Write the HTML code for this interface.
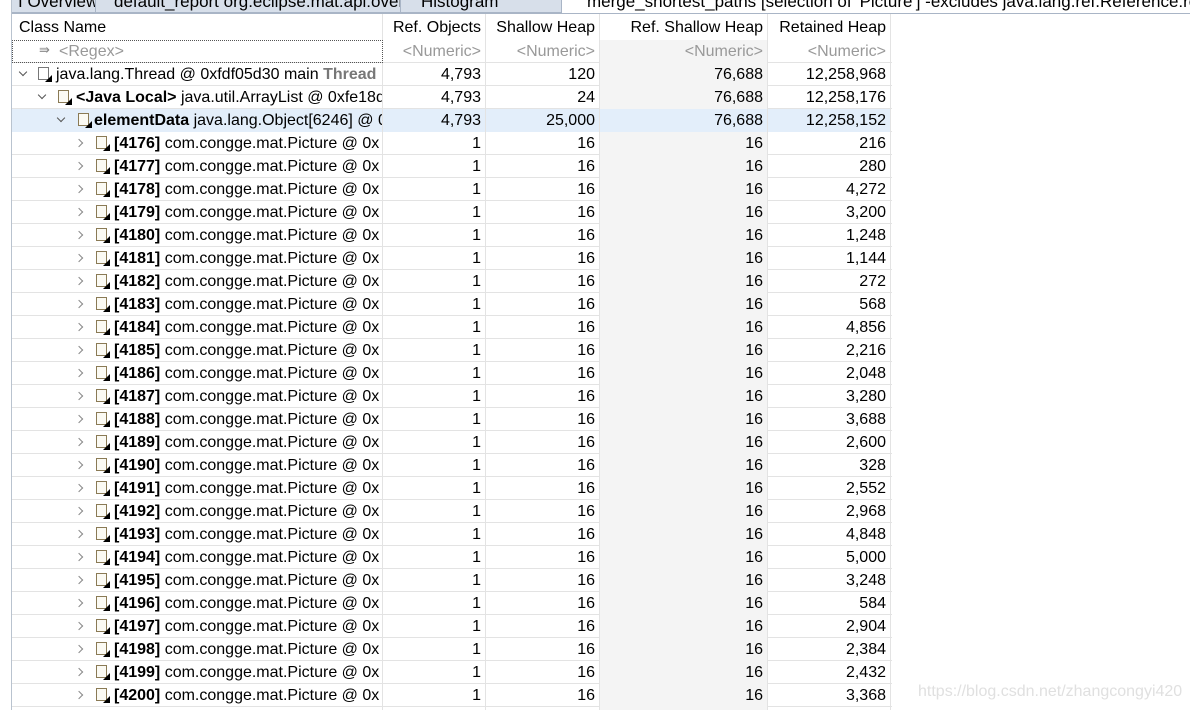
<!DOCTYPE html>
<html><head><meta charset="utf-8"><style>
*{margin:0;padding:0;box-sizing:border-box}
html,body{width:1190px;height:710px;overflow:hidden}
body{background:#fff;font-family:"Liberation Sans",sans-serif;font-size:16px;color:#000;position:relative}
.tabs{position:absolute;left:0;top:0;width:1190px;height:13px;overflow:hidden}
.tab{position:absolute;top:0;height:13px;background:#d7dfea;border-right:1px solid #a9b5c6;border-bottom:1px solid #a9b5c6;overflow:hidden}
.tab span{position:absolute;top:-8px;white-space:nowrap;font-size:17px;color:#000}
.lstrip{position:absolute;left:11px;top:0;width:1px;height:710px;background:#b9c3cf}
.row{position:absolute;left:12px;width:880px;height:23px;border-bottom:1px solid #e3e3e3}
.c{position:absolute;top:0;height:23px;line-height:24px;white-space:nowrap;overflow:hidden;border-right:1px solid #e3e3e3}
.n{text-align:right;padding-right:4px}
.c1{left:0;width:371px}
.c2{left:371px;width:103px}
.c3{left:474px;width:114px}
.c4{left:588px;width:168px;background:#f4f4f4}
.c5{left:756px;width:123px}
.sel .c{background:#e3eefa}
.chev{position:absolute;top:8px;width:6px;height:6px;border-right:1.3px solid #888;border-bottom:1.3px solid #888}
.cr{transform:rotate(-45deg)}
.cd{transform:rotate(45deg);top:6px;border-color:#555}
.ic{position:absolute;top:4px;width:11px;height:13px;border:1px solid #8a7a55;background:#fbfaf3}
.ic:after{content:"";position:absolute;right:-4px;bottom:-3px;border-left:7px solid transparent;border-bottom:7px solid #000}
.t{position:absolute;top:0}
.g{color:#999}
</style></head><body>
<div class="tabs">
<div class="tab" style="left:12px;width:84px"><span style="left:6px">I Overview</span></div>
<div class="tab" style="left:96px;width:305px"><span style="left:18px">default_report  org.eclipse.mat.api:overview</span></div>
<div class="tab" style="left:401px;width:161px"><span style="left:20px">Histogram</span></div>
<div class="tab" style="left:562px;width:640px;background:#fff;border:none"><span style="left:25px">merge_shortest_paths [selection of 'Picture'] -excludes java.lang.ref.Reference:refer</span></div>
</div>
<div style="position:absolute;left:12px;top:13px;width:1178px;height:1px;background:#a9b5c6"></div>
<div class="lstrip"></div>
<div class="row" style="top:14px;height:26px;border:none">
<div class="c c1" style="height:26px;line-height:28px;padding-left:7px">Class Name</div>
<div class="c c2 n" style="height:26px;line-height:28px">Ref. Objects</div>
<div class="c c3 n" style="height:26px;line-height:28px">Shallow Heap</div>
<div class="c c4 n" style="height:26px;line-height:28px;background:#fff">Ref. Shallow Heap</div>
<div class="c c5 n" style="height:26px;line-height:28px">Retained Heap</div>
</div>
<div class="row" style="top:40px">
<div class="c c1 g" style="border:1px dotted #555;padding-left:46px;line-height:22px">&lt;Regex&gt;<span style="position:absolute;left:26px;top:-2px;color:#888;font-size:13px">⇛</span></div>
<div class="c c2 n g">&lt;Numeric&gt;</div>
<div class="c c3 n g">&lt;Numeric&gt;</div>
<div class="c c4 n g">&lt;Numeric&gt;</div>
<div class="c c5 n g">&lt;Numeric&gt;</div>
</div>
<div class="row" style="top:63px">
<div class="c c1"><i class="chev cd" style="left:8px"></i><i class="ic" style="left:26px;background:#fff;border-color:#777"></i><span class="t" style="left:44px">java.lang.Thread @ 0xfdf05d30  main <b style="color:#777">Thread</b></span></div>
<div class="c c2 n">4,793</div><div class="c c3 n">120</div><div class="c c4 n">76,688</div><div class="c c5 n">12,258,968</div>
</div>
<div class="row" style="top:86px">
<div class="c c1"><i class="chev cd" style="left:27px"></i><i class="ic" style="left:46px"></i><span class="t" style="left:64px"><b>&lt;Java Local&gt;</b> java.util.ArrayList @ 0xfe18d</span></div>
<div class="c c2 n">4,793</div><div class="c c3 n">24</div><div class="c c4 n">76,688</div><div class="c c5 n">12,258,176</div>
</div>
<div class="row sel" style="top:109px">
<div class="c c1"><i class="chev cd" style="left:46px"></i><i class="ic" style="left:66px"></i><span class="t" style="left:82px"><b>elementData</b> java.lang.Object[6246] @ 0</span></div>
<div class="c c2 n">4,793</div><div class="c c3 n">25,000</div><div class="c c4 n">76,688</div><div class="c c5 n">12,258,152</div>
</div>
<div class="row" style="top:132px"><div class="c c1"><i class="chev cr" style="left:64px"></i><i class="ic" style="left:84px"></i><span class="t" style="left:102px"><b>[4176]</b> com.congge.mat.Picture @ 0x</span></div><div class="c c2 n">1</div><div class="c c3 n">16</div><div class="c c4 n">16</div><div class="c c5 n">216</div></div>
<div class="row" style="top:155px"><div class="c c1"><i class="chev cr" style="left:64px"></i><i class="ic" style="left:84px"></i><span class="t" style="left:102px"><b>[4177]</b> com.congge.mat.Picture @ 0x</span></div><div class="c c2 n">1</div><div class="c c3 n">16</div><div class="c c4 n">16</div><div class="c c5 n">280</div></div>
<div class="row" style="top:178px"><div class="c c1"><i class="chev cr" style="left:64px"></i><i class="ic" style="left:84px"></i><span class="t" style="left:102px"><b>[4178]</b> com.congge.mat.Picture @ 0x</span></div><div class="c c2 n">1</div><div class="c c3 n">16</div><div class="c c4 n">16</div><div class="c c5 n">4,272</div></div>
<div class="row" style="top:201px"><div class="c c1"><i class="chev cr" style="left:64px"></i><i class="ic" style="left:84px"></i><span class="t" style="left:102px"><b>[4179]</b> com.congge.mat.Picture @ 0x</span></div><div class="c c2 n">1</div><div class="c c3 n">16</div><div class="c c4 n">16</div><div class="c c5 n">3,200</div></div>
<div class="row" style="top:224px"><div class="c c1"><i class="chev cr" style="left:64px"></i><i class="ic" style="left:84px"></i><span class="t" style="left:102px"><b>[4180]</b> com.congge.mat.Picture @ 0x</span></div><div class="c c2 n">1</div><div class="c c3 n">16</div><div class="c c4 n">16</div><div class="c c5 n">1,248</div></div>
<div class="row" style="top:247px"><div class="c c1"><i class="chev cr" style="left:64px"></i><i class="ic" style="left:84px"></i><span class="t" style="left:102px"><b>[4181]</b> com.congge.mat.Picture @ 0x</span></div><div class="c c2 n">1</div><div class="c c3 n">16</div><div class="c c4 n">16</div><div class="c c5 n">1,144</div></div>
<div class="row" style="top:270px"><div class="c c1"><i class="chev cr" style="left:64px"></i><i class="ic" style="left:84px"></i><span class="t" style="left:102px"><b>[4182]</b> com.congge.mat.Picture @ 0x</span></div><div class="c c2 n">1</div><div class="c c3 n">16</div><div class="c c4 n">16</div><div class="c c5 n">272</div></div>
<div class="row" style="top:293px"><div class="c c1"><i class="chev cr" style="left:64px"></i><i class="ic" style="left:84px"></i><span class="t" style="left:102px"><b>[4183]</b> com.congge.mat.Picture @ 0x</span></div><div class="c c2 n">1</div><div class="c c3 n">16</div><div class="c c4 n">16</div><div class="c c5 n">568</div></div>
<div class="row" style="top:316px"><div class="c c1"><i class="chev cr" style="left:64px"></i><i class="ic" style="left:84px"></i><span class="t" style="left:102px"><b>[4184]</b> com.congge.mat.Picture @ 0x</span></div><div class="c c2 n">1</div><div class="c c3 n">16</div><div class="c c4 n">16</div><div class="c c5 n">4,856</div></div>
<div class="row" style="top:339px"><div class="c c1"><i class="chev cr" style="left:64px"></i><i class="ic" style="left:84px"></i><span class="t" style="left:102px"><b>[4185]</b> com.congge.mat.Picture @ 0x</span></div><div class="c c2 n">1</div><div class="c c3 n">16</div><div class="c c4 n">16</div><div class="c c5 n">2,216</div></div>
<div class="row" style="top:362px"><div class="c c1"><i class="chev cr" style="left:64px"></i><i class="ic" style="left:84px"></i><span class="t" style="left:102px"><b>[4186]</b> com.congge.mat.Picture @ 0x</span></div><div class="c c2 n">1</div><div class="c c3 n">16</div><div class="c c4 n">16</div><div class="c c5 n">2,048</div></div>
<div class="row" style="top:385px"><div class="c c1"><i class="chev cr" style="left:64px"></i><i class="ic" style="left:84px"></i><span class="t" style="left:102px"><b>[4187]</b> com.congge.mat.Picture @ 0x</span></div><div class="c c2 n">1</div><div class="c c3 n">16</div><div class="c c4 n">16</div><div class="c c5 n">3,280</div></div>
<div class="row" style="top:408px"><div class="c c1"><i class="chev cr" style="left:64px"></i><i class="ic" style="left:84px"></i><span class="t" style="left:102px"><b>[4188]</b> com.congge.mat.Picture @ 0x</span></div><div class="c c2 n">1</div><div class="c c3 n">16</div><div class="c c4 n">16</div><div class="c c5 n">3,688</div></div>
<div class="row" style="top:431px"><div class="c c1"><i class="chev cr" style="left:64px"></i><i class="ic" style="left:84px"></i><span class="t" style="left:102px"><b>[4189]</b> com.congge.mat.Picture @ 0x</span></div><div class="c c2 n">1</div><div class="c c3 n">16</div><div class="c c4 n">16</div><div class="c c5 n">2,600</div></div>
<div class="row" style="top:454px"><div class="c c1"><i class="chev cr" style="left:64px"></i><i class="ic" style="left:84px"></i><span class="t" style="left:102px"><b>[4190]</b> com.congge.mat.Picture @ 0x</span></div><div class="c c2 n">1</div><div class="c c3 n">16</div><div class="c c4 n">16</div><div class="c c5 n">328</div></div>
<div class="row" style="top:477px"><div class="c c1"><i class="chev cr" style="left:64px"></i><i class="ic" style="left:84px"></i><span class="t" style="left:102px"><b>[4191]</b> com.congge.mat.Picture @ 0x</span></div><div class="c c2 n">1</div><div class="c c3 n">16</div><div class="c c4 n">16</div><div class="c c5 n">2,552</div></div>
<div class="row" style="top:500px"><div class="c c1"><i class="chev cr" style="left:64px"></i><i class="ic" style="left:84px"></i><span class="t" style="left:102px"><b>[4192]</b> com.congge.mat.Picture @ 0x</span></div><div class="c c2 n">1</div><div class="c c3 n">16</div><div class="c c4 n">16</div><div class="c c5 n">2,968</div></div>
<div class="row" style="top:523px"><div class="c c1"><i class="chev cr" style="left:64px"></i><i class="ic" style="left:84px"></i><span class="t" style="left:102px"><b>[4193]</b> com.congge.mat.Picture @ 0x</span></div><div class="c c2 n">1</div><div class="c c3 n">16</div><div class="c c4 n">16</div><div class="c c5 n">4,848</div></div>
<div class="row" style="top:546px"><div class="c c1"><i class="chev cr" style="left:64px"></i><i class="ic" style="left:84px"></i><span class="t" style="left:102px"><b>[4194]</b> com.congge.mat.Picture @ 0x</span></div><div class="c c2 n">1</div><div class="c c3 n">16</div><div class="c c4 n">16</div><div class="c c5 n">5,000</div></div>
<div class="row" style="top:569px"><div class="c c1"><i class="chev cr" style="left:64px"></i><i class="ic" style="left:84px"></i><span class="t" style="left:102px"><b>[4195]</b> com.congge.mat.Picture @ 0x</span></div><div class="c c2 n">1</div><div class="c c3 n">16</div><div class="c c4 n">16</div><div class="c c5 n">3,248</div></div>
<div class="row" style="top:592px"><div class="c c1"><i class="chev cr" style="left:64px"></i><i class="ic" style="left:84px"></i><span class="t" style="left:102px"><b>[4196]</b> com.congge.mat.Picture @ 0x</span></div><div class="c c2 n">1</div><div class="c c3 n">16</div><div class="c c4 n">16</div><div class="c c5 n">584</div></div>
<div class="row" style="top:615px"><div class="c c1"><i class="chev cr" style="left:64px"></i><i class="ic" style="left:84px"></i><span class="t" style="left:102px"><b>[4197]</b> com.congge.mat.Picture @ 0x</span></div><div class="c c2 n">1</div><div class="c c3 n">16</div><div class="c c4 n">16</div><div class="c c5 n">2,904</div></div>
<div class="row" style="top:638px"><div class="c c1"><i class="chev cr" style="left:64px"></i><i class="ic" style="left:84px"></i><span class="t" style="left:102px"><b>[4198]</b> com.congge.mat.Picture @ 0x</span></div><div class="c c2 n">1</div><div class="c c3 n">16</div><div class="c c4 n">16</div><div class="c c5 n">2,384</div></div>
<div class="row" style="top:661px"><div class="c c1"><i class="chev cr" style="left:64px"></i><i class="ic" style="left:84px"></i><span class="t" style="left:102px"><b>[4199]</b> com.congge.mat.Picture @ 0x</span></div><div class="c c2 n">1</div><div class="c c3 n">16</div><div class="c c4 n">16</div><div class="c c5 n">2,432</div></div>
<div class="row" style="top:684px"><div class="c c1"><i class="chev cr" style="left:64px"></i><i class="ic" style="left:84px"></i><span class="t" style="left:102px"><b>[4200]</b> com.congge.mat.Picture @ 0x</span></div><div class="c c2 n">1</div><div class="c c3 n">16</div><div class="c c4 n">16</div><div class="c c5 n">3,368</div></div>
<div class="row" style="top:707px;height:3px;border:none"><div class="c c1" style="height:3px"></div><div class="c c2" style="height:3px"></div><div class="c c3" style="height:3px"></div><div class="c c4" style="height:3px"></div><div class="c c5" style="height:3px"></div></div>
<div style="position:absolute;left:918px;top:683px;color:#e0e0e0;font-size:16px;white-space:nowrap">https://blog.csdn.net/zhangcongyi420</div>
</body></html>
